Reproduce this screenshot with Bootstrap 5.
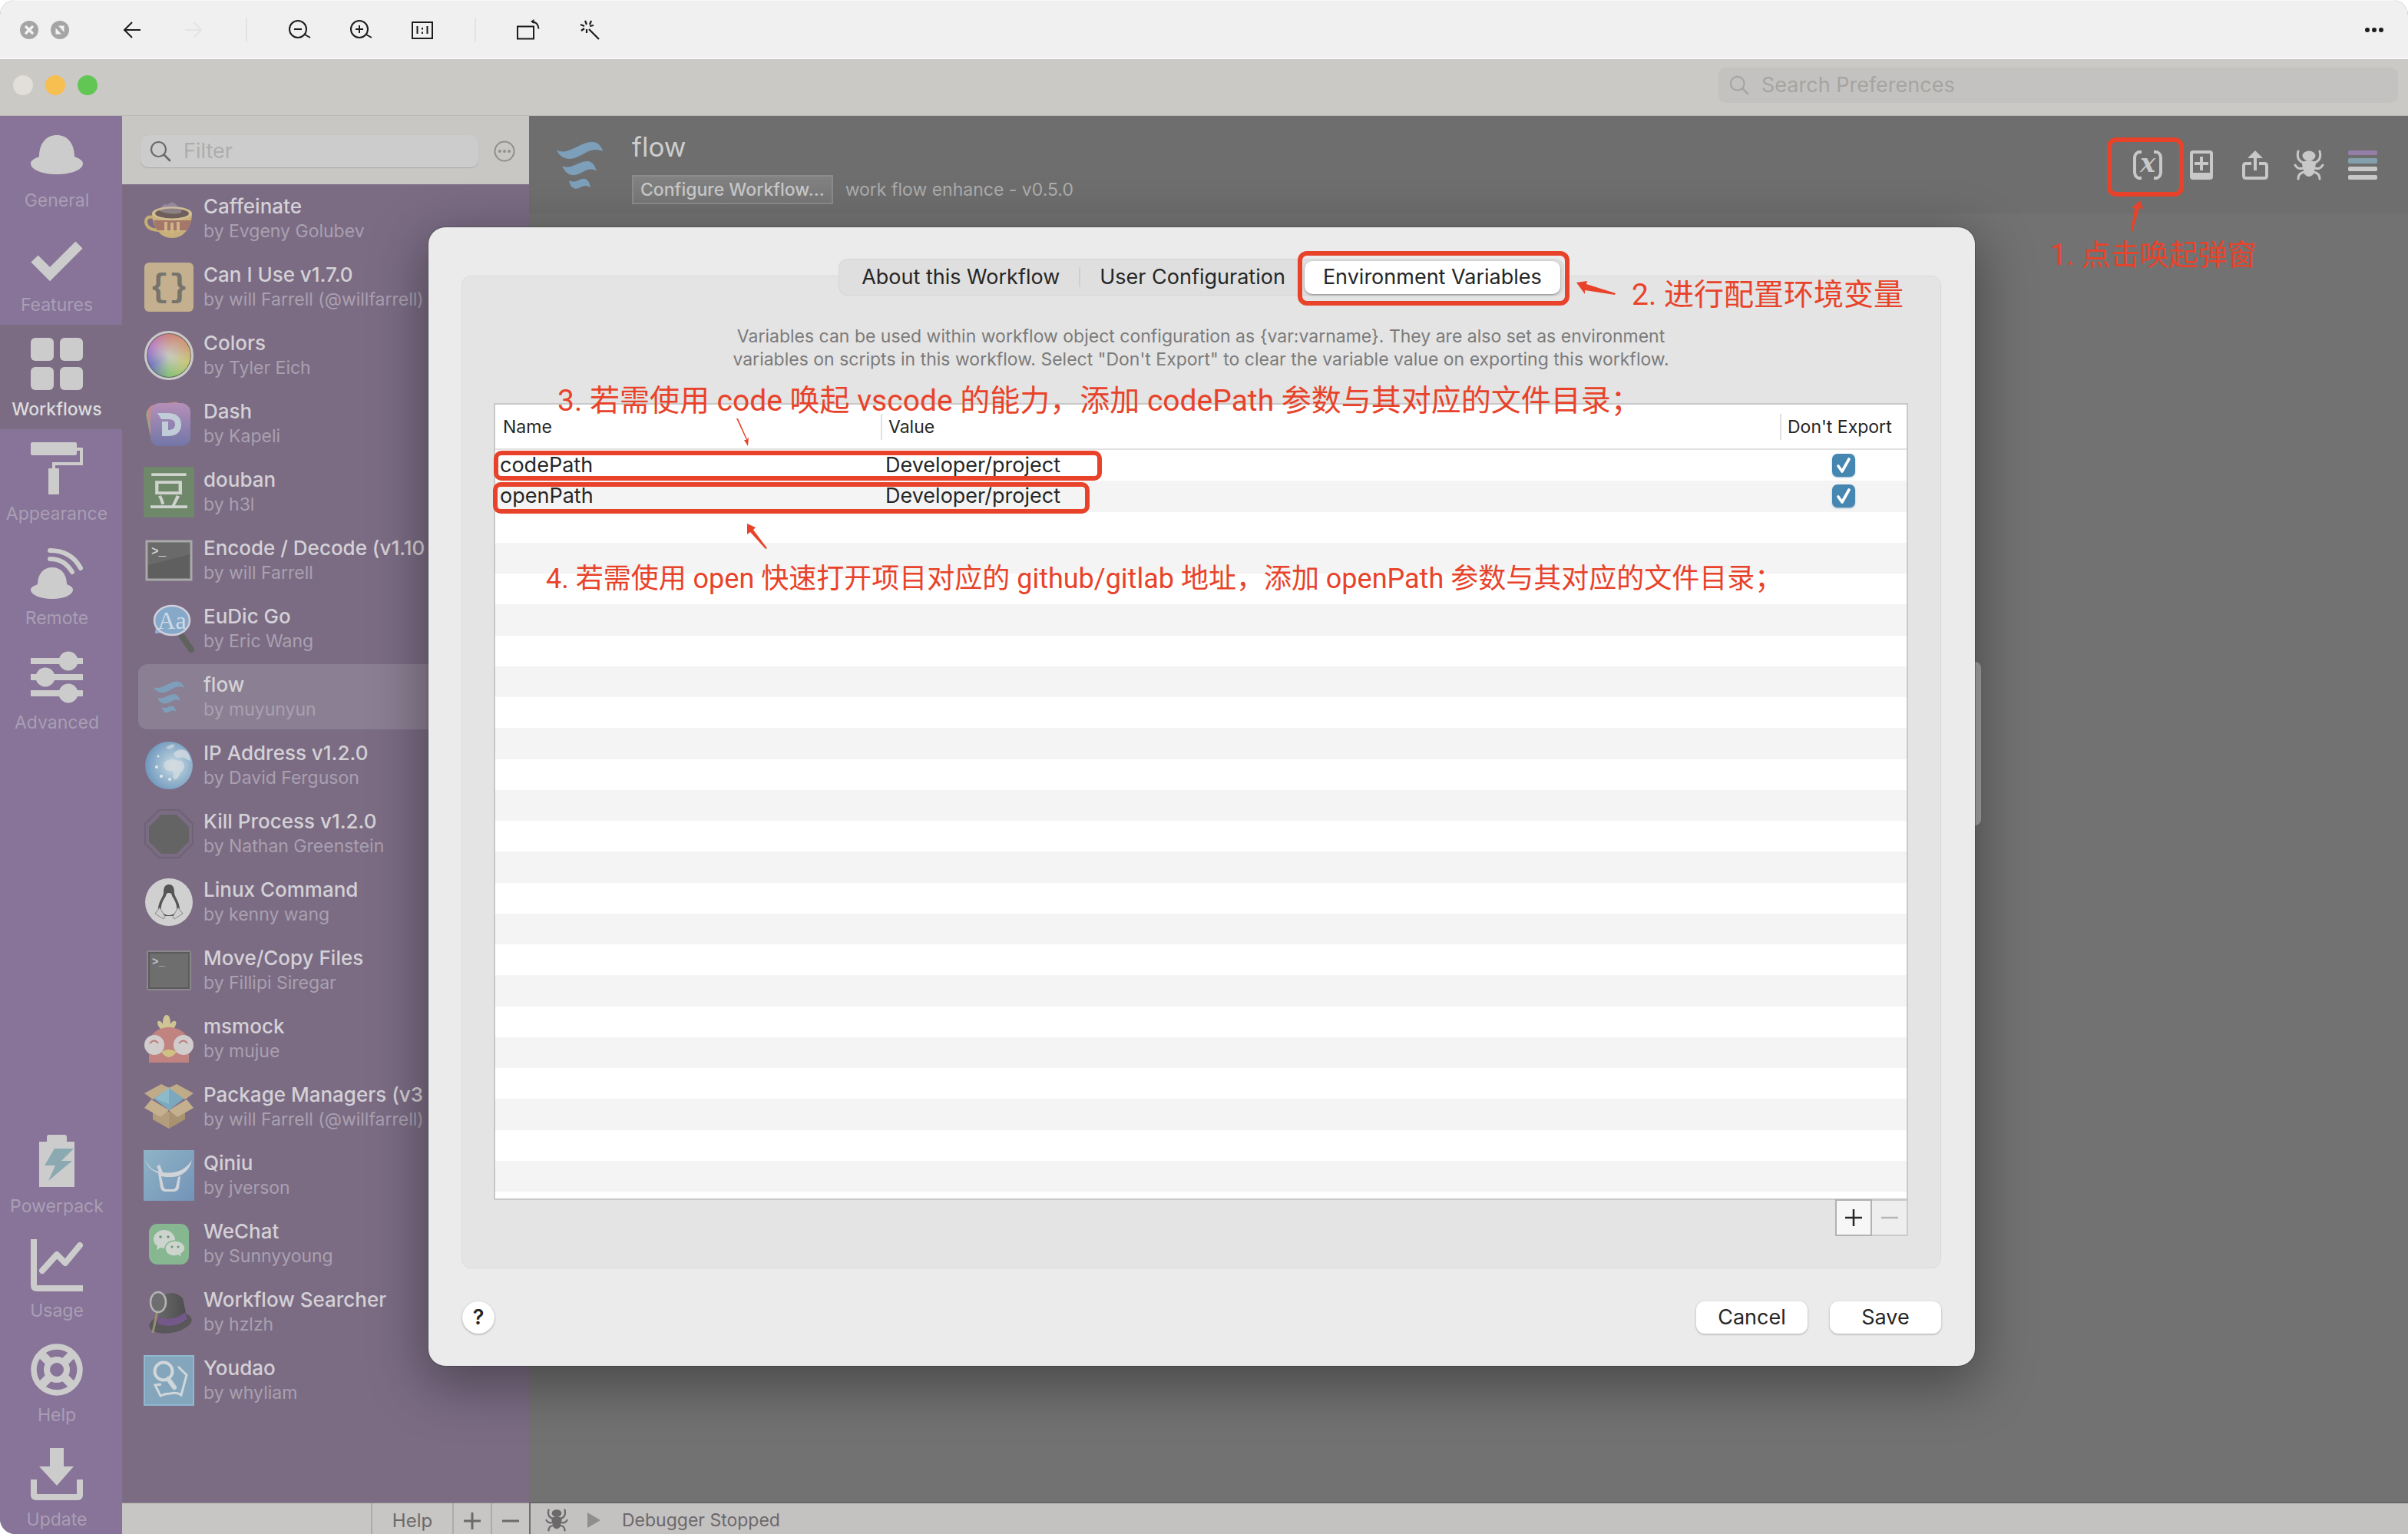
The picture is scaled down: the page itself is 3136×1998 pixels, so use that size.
<!DOCTYPE html>
<html lang="en">
<head>
<meta charset="utf-8">
<meta name="viewport" content="width=device-width, initial-scale=1">
<title>Workflows</title>
<link href="https://cdn.jsdelivr.net/npm/bootstrap@5.3.0/dist/css/bootstrap.min.css" rel="stylesheet">
<style>
  :root { --ink: #262626; --pale: #cccccc; --pin: #e8432a; }
  body { font-family: Inter, "Noto Sans CJK SC", sans-serif; font-size: 27px; line-height: 32px; color: var(--ink); background: #fff; }
  button { border: 0; padding: 0; background: none; color: inherit; }
  svg { display: block; flex: none; }
  .shell { height: 100vh; overflow: hidden; border-radius: 20px 20px 0 20px; background: #6f6f6f; }

  /* viewer toolbar */
  .viewer { height: 77px; padding: 0 4px 0 18px; background: #f0f0f0; border-top: 1px solid #f8f8f8; border-bottom: 1px solid #fff; color: #1c1c1c; }
  .viewer .dot-slot { width: 40px; }
  .viewer .tool-slot { width: 80px; height: 75px; }
  .viewer .tool-nav { margin-left: 34px; }
  .viewer .rule-line { width: 2px; height: 32px; margin: 0 28px; background: #e2e2e2; }

  /* window title bar */
  .titlebar { height: 74px; padding: 0 13px 5px 17px; background: #cac9c5; border-bottom: 1px solid #b9b8b5; }
  .light { width: 26px; height: 26px; border-radius: 50%; }
  .find-prefs { width: 885px; height: 46px; padding: 0 14px; border-radius: 10px; background: #c4c2c0; }
  .find-prefs input, .find-list input { flex: 1; min-width: 0; border: 0; padding: 0; background: none; outline: 0; color: #555; }
  .find-prefs input::placeholder { color: #a6a4a2; opacity: 1; }
  .find-list input::placeholder { color: #adadad; opacity: 1; }

  /* purple rail */
  .rail { width: 159px; background: #877498; color: var(--pale); }
  .rail a { color: #aa9eb5; font-size: 23px; line-height: 30px; padding: 17px 11px 10px 0; display: flex; flex-direction: column; align-items: center; gap: 10px; text-decoration: none; height: 136px; }
  .rail a svg { color: var(--pale); }
  .rail a.current { background: #7b6c84; color: #dcdcdc; font-weight: 500; }
  .rail .rail-end a:last-child { height: 129px; }

  /* workflow list */
  .flows { width: 530px; background: #7b6c84; }
  .flows-top { height: 89px; padding: 3px 18px 0 24px; background: #c8c7c4; }
  .find-list { width: 440px; height: 42px; padding: 0 12px; border-radius: 10px; background: #cccccc; box-shadow: 0 1px 1px #a9a9a9, 0 0 1px #bbb; }
  .flow-list { padding: 2px 21px 0; }
  .flow-item { height: 85px; margin-bottom: 4px; padding-left: 8px; border-radius: 12px; gap: 13px; white-space: nowrap; color: #d4d1d6; text-decoration: none; }
  .flow-item.current { background: #8b7f93; }
  .flow-item strong { font-weight: 500; font-size: 26px; line-height: 33px; display: block; }
  .flow-item small { font-size: 23px; line-height: 33px; display: block; color: #aaa0b0; }
  .flow-icon { width: 64px; height: 64px; overflow: visible; }
  .foot { height: 41px; border-top: 1px solid #8c8a8c; font-size: 24px; color: #6b6a6a; background: #c7c6c4; }
  .foot button { border-left: 2px solid #adacaa; height: 40px; padding-top: 5px; }
  .foot .foot-help { width: 106px; }
  .foot .foot-step { width: 50px; }

  /* canvas */
  .stage-top { height: 127px; padding: 20px 39px 0 36px; background: #6e6e6e; }
  .stage-body { background: #727272; }
  .stage-logo { margin-top: 13px; }
  .stage-text { padding-left: 38px; }
  .stage-title { font-size: 35px; line-height: 40px; font-weight: 400; color: #cdcdcd; margin: 0 0 17px; }
  .btn-config { height: 38px; padding: 0 9px; border: 2px solid #8b8b8b; background: linear-gradient(#828282, #777); color: #c8c8c8; font-size: 23px; line-height: 32px; font-weight: 500; }
  .stage-note { font-size: 23px; color: #acacac; }
  .stage-tools { gap: 30px; color: #c8c8c8; padding-top: 24px; }
  .stage-tools button { width: 40px; height: 40px; }
  .debug { height: 41px; background: #c4c1c1; border-top: 1px solid #59595b; border-left: 2px solid #6d6d6d; padding: 4px 0 0 19px; font-size: 23px; color: #6b696a; }

  /* sheet */
  .sheet { position: absolute; top: 296px; left: 558px; right: 564px; padding: 42px 44px 42px 43px; border-radius: 22px; background: #ebebeb; box-shadow: 0 0 0 1px rgba(60,60,60,.45), 0 20px 70px 6px rgba(0,0,0,.36); }
  .grip { position: absolute; top: 862px; right: 556px; width: 40px; height: 213px; border-radius: 8px; background: #a9a9a9; }
  .seg { height: 46px; padding: 1px 4px; border-radius: 11px; background: #dfdfdf; box-shadow: 0 0 0 1px #d6d6d6; margin-bottom: -25px; position: relative; }
  .seg button { height: 43px; padding: 0 25px; border-radius: 10px; white-space: nowrap; }
  .seg button.on { padding: 0 24px; background: #fff; box-shadow: 0 1px 3px rgba(0,0,0,.4); }
  .seg .seg-line { width: 2px; height: 26px; background: #cfcfcf; }
  .pane { padding: 63px 42px 41px 41px; border: 1px solid #dadada; border-radius: 12px; background: #e4e4e4; }
  .pane p { font-size: 23px; line-height: 30px; color: #7b7b7b; margin-bottom: 42px; }
  .vars-box { height: 1038px; border: 2px solid #c8c8c8; background: #fff; overflow: hidden; }
  .vars { width: 100%; height: 1025px; table-layout: fixed; border-collapse: separate; border-spacing: 0; }
  .vars th { height: 59px; padding: 0 10px; font-size: 23px; font-weight: 400; border-bottom: 2px solid #e2e2e2; position: relative; }
  .vars th + th::before { content: ""; position: absolute; left: 0; top: 12px; width: 2px; height: 34px; background: #e0e0e0; }
  .vars td { height: 40px; padding: 0 6px; line-height: 32px; }
  .vars tbody tr:nth-child(even) { background: #f4f4f4; }
  .vars .col-name { width: 502px; }
  .vars .col-skip { width: 165px; }
  .tick { appearance: none; display: block; width: 30px; height: 30px; margin: 0 auto; border-radius: 7px; box-shadow: 0 1px 2px rgba(60,120,170,.5);
    background: #4687b2 url("data:image/svg+xml,%3Csvg xmlns='http://www.w3.org/2000/svg' viewBox='0 0 30 30'%3E%3Cpath d='M8 16l5 7L22 7' fill='none' stroke='white' stroke-width='3.600' stroke-linecap='round' stroke-linejoin='round'/%3E%3C/svg%3E") center/100%; }
  .step { width: 48px; height: 48px; border: 2px solid #b2b2b2; background: #f7f7f7; margin-top: -1px; }
  .step + .step { border-color: #cacaca; border-left: 0; background: #eeeeee; color: #b5b5b5; width: 47px; }
  .sheet-foot { padding: 43px 0 0 1px; gap: 29px; }
  .push { width: 145px; height: 42px; border-radius: 11px; background: #fff; box-shadow: 0 1px 3px rgba(0,0,0,.28); }
  .help-dot { width: 42px; height: 42px; border-radius: 50%; background: #fff; box-shadow: 0 1px 3px rgba(0,0,0,.3); font-weight: 600; }

  /* hand-drawn notes */
  .notes { position: absolute; left: 0; top: 0; pointer-events: none; }
  .note { position: absolute; white-space: nowrap; font: 39px/48px Roboto, "Noto Sans CJK SC", sans-serif; color: var(--pin); }
  .note-1 { left: 2670px; top: 308px; font-size: 38px; }
  .note-2 { left: 2125px; top: 360px; }
  .note-3 { left: 726px; top: 498px; }
  .note-4 { left: 711px; top: 730px; font-size: 36px; }
</style>
</head>
<body>
<svg width="0" height="0" class="position-absolute" aria-hidden="true">
  <defs>
    <linearGradient id="gDash" x1="0" y1="0" x2="0" y2="1"><stop offset="0" stop-color="#b58fb8"/><stop offset="1" stop-color="#7277a8"/></linearGradient>
    <linearGradient id="gQiniu" x1="0" y1="0" x2="1" y2="1"><stop offset="0" stop-color="#8fb4c6"/><stop offset="1" stop-color="#7393b8"/></linearGradient>
    <radialGradient id="gGlobe" cx=".6" cy=".5" r=".6"><stop offset="0" stop-color="#d5dfe4"/><stop offset=".35" stop-color="#a9c4d6"/><stop offset="1" stop-color="#6f97bd"/></radialGradient>
    <linearGradient id="gHat" x1="0" y1="0" x2="1" y2="0"><stop offset="0" stop-color="#6a6a6a"/><stop offset="1" stop-color="#4d4d4f"/></linearGradient>
    <symbol id="wave" viewBox="0 0 60 63"><path d="M0 12C6 14 12 14 18 11C28 7 38 0 48 1C54 2 58 6 60 13C56 11 50 10 44 12C34 16 26 23 16 23C8 22 3 18 0 12ZM7 32C11 34 16 34 21 32C28 29 34 26 41 26C47 27 50 32 52 39C48 36 43 36 38 38C32 41 26 45 20 44C13 43 10 38 7 32ZM16 51C20 53 24 53 28 51C34 48 38 48 41 52C43 54 43 57 44 60C40 58 37 57 33 59C29 61 26 63 22 61C18 59 17 55 16 51Z" fill="#7d9fba"/></symbol>
    <symbol id="bug" viewBox="0 0 40 40"><g fill="currentColor"><ellipse cx="20" cy="8" rx="8.500" ry="6.500"/><path d="M11 17c3-4 15-4 18 0c0 5-2 7-2 11s-4 7-7 7s-7-3-7-7s-2-6-2-11z"/></g><g fill="none" stroke="currentColor" stroke-width="3" stroke-linecap="round"><path d="M6 2c-2 8 0 13 7 15M34 2c2 8 0 13-7 15M2 20c3 5 6 5 11 4M38 20c-3 5-6 5-11 4M6 38c0-5 2-8 8-9M34 38c0-5-2-8-8-9"/></g></symbol>
    <symbol id="lens" viewBox="0 0 28 28"><g fill="none" stroke="currentColor" stroke-linecap="round"><circle cx="11.500" cy="11.500" r="9.500" stroke-width="2.200"/><path d="M18.500 18.500L26 26" stroke-width="2.800"/></g></symbol>
  </defs>
</svg>

<div class="shell d-flex flex-column">
  <header class="viewer d-flex align-items-center">
    <button class="dot-slot d-flex justify-content-center" aria-label="Close"><svg width="24" height="24"><circle cx="12" cy="12" r="12" fill="#a5a5a5"/><path d="M8 8l8 8M16 8l-8 8" stroke="#f2f2f2" stroke-width="3.500" stroke-linecap="round"/></svg></button>
    <button class="dot-slot d-flex justify-content-center" aria-label="Full screen"><svg width="24" height="24"><circle cx="12" cy="12" r="12" fill="#a5a5a5"/><path d="M10 6.500h7.500V15zM6.500 9.500V17.500H14z" fill="#f2f2f2"/></svg></button>
    <div class="tool-nav d-flex">
      <button class="tool-slot d-flex align-items-center justify-content-center" aria-label="Back"><svg width="24" height="24" fill="none" stroke="currentColor" stroke-width="2"><path d="M23 12H2M12 2L2 12l10 10"/></svg></button>
      <button class="tool-slot d-flex align-items-center justify-content-center" aria-label="Forward"><svg width="24" height="24" fill="none" stroke="#e4e4e4" stroke-width="2"><path d="M1 12h21M12 2l10 10l-10 10"/></svg></button>
    </div>
    <div class="rule-line"></div>
    <button class="tool-slot d-flex align-items-center justify-content-center" aria-label="Zoom out"><svg width="30" height="28" fill="none" stroke="currentColor" stroke-width="2"><circle cx="13" cy="13" r="11"/><path d="M8 13h10M21 19.500l8 4.500"/></svg></button>
    <button class="tool-slot d-flex align-items-center justify-content-center" aria-label="Zoom in"><svg width="30" height="28" fill="none" stroke="currentColor" stroke-width="2"><circle cx="13" cy="13" r="11"/><path d="M8 13h10M13 8v10M21 19.500l8 4.500"/></svg></button>
    <button class="tool-slot d-flex align-items-center justify-content-center" aria-label="Actual size"><svg width="28" height="24" fill="none" stroke="currentColor" stroke-width="2"><path d="M1 2h26v21H1zM7.500 7v10M20.500 7v10M14 9v2.500M14 14.500V17"/></svg></button>
    <div class="rule-line"></div>
    <button class="tool-slot d-flex align-items-center justify-content-center" aria-label="Rotate"><svg width="30" height="28" fill="none" stroke="currentColor" stroke-width="2"><path d="M1 9.500h21v16h-21zM20 3.500c6 0 8 4 8.500 9"/><path d="M18 3L22.500 0v6z" fill="currentColor" stroke="none"/></svg></button>
    <button class="tool-slot d-flex align-items-center justify-content-center" aria-label="Enhance"><svg width="26" height="26" fill="none" stroke="currentColor" stroke-width="2.200"><path d="M12 12l13 13M9 6L7 1M13 6l2-5M6 8L1 6M13 8l5-1M6 11l-4 3M9 12v5"/></svg></button>
    <button class="tool-slot d-flex align-items-center justify-content-center ms-auto" aria-label="More"><svg width="26" height="8" fill="currentColor"><circle cx="4" cy="4" r="3"/><circle cx="13" cy="4" r="3"/><circle cx="22" cy="4" r="3"/></svg></button>
  </header>

  <div class="titlebar d-flex align-items-center justify-content-between">
    <div class="d-flex gap-3"><span class="light" style="background:#e2deda"></span><span class="light" style="background:#f6bf4f"></span><span class="light" style="background:#62c655"></span></div>
    <label class="find-prefs d-flex align-items-center gap-3"><svg width="26" height="28" color="#a6a4a2"><use href="#lens"/></svg><input type="search" placeholder="Search Preferences" aria-label="Search Preferences"></label>
  </div>

  <div class="d-flex flex-fill" style="min-height:0">
    <nav class="rail d-flex flex-column justify-content-between flex-shrink-0">
      <div>
        <a href="#"><svg width="68" height="68" fill="currentColor"><path d="M11 36C11 18 21 8 34 8s23 10 23 28c7 3 11 5 11 9c0 8-15 14-34 14S0 53 0 45c0-4 4-6 11-9z"/></svg>General</a>
        <a href="#"><svg width="68" height="68" fill="none" stroke="currentColor" stroke-width="13"><path d="M5 33l20 20L63 15"/></svg>Features</a>
        <a href="#" class="current"><svg width="68" height="68" fill="currentColor"><rect width="30" height="30" rx="6"/><rect x="38" width="30" height="30" rx="6"/><rect y="38" width="30" height="30" rx="6"/><rect x="38" y="38" width="30" height="30" rx="6"/></svg>Workflows</a>
        <a href="#"><svg width="68" height="68"><rect width="60" height="17" rx="2" fill="currentColor"/><path d="M59 9h7v19H30v8" fill="none" stroke="currentColor" stroke-width="4"/><rect x="23" y="34" width="14" height="34" rx="1" fill="currentColor"/></svg>Appearance</a>
        <a href="#"><svg width="68" height="68"><path d="M9 49C9 35 17 27 28 27s19 8 19 22c5 2 8 4 8 7c0 7-12 12-27 12S0 63 0 56c0-3 4-5 9-7z" fill="currentColor"/><g fill="none" stroke="currentColor" stroke-width="6" stroke-linecap="round"><path d="M25 16c14 0 22 6 29 17M25 5c19 0 32 8 40 23"/></g></svg>Remote</a>
        <a href="#"><svg width="68" height="68" fill="currentColor"><path d="M0 9h68v8H0zM0 30h68v8H0zM0 51h68v8H0z"/><circle cx="49" cy="13" r="12.500"/><circle cx="19" cy="34" r="12.500"/><circle cx="49" cy="55" r="12.500"/></svg>Advanced</a>
      </div>
      <div class="rail-end">
        <a href="#"><svg width="68" height="68"><path d="M24 0h20q3 0 3 3v6h10v59H11V9h10V3q0-3 3-3z" fill="currentColor"/><path d="M33 18h25L42 34h14L25 60l9-20H20z" fill="#8ba9b0" transform="translate(-2)"/></svg>Powerpack</a>
        <a href="#"><svg width="68" height="68" fill="none" stroke="currentColor" stroke-width="8"><path d="M4 0v60q0 4 4 4h60"/><path d="M15 41l19-21l11 11L64 8" stroke-linecap="round" stroke-linejoin="round"/></svg>Usage</a>
        <a href="#"><svg width="68" height="68" fill="none" stroke="currentColor"><circle cx="34" cy="34" r="30" stroke-width="7.500"/><circle cx="34" cy="34" r="13" stroke-width="8"/><path d="M13 13l12 12M55 13L43 25M13 55l12-12M55 55L43 43" stroke-width="11"/></svg>Help</a>
        <a href="#"><svg width="68" height="68"><path d="M25 0h18v24h13L34 49L11 24h14z" fill="currentColor"/><path d="M4 41v20q0 3 3 3h54q3 0 3-3V41" fill="none" stroke="currentColor" stroke-width="8"/></svg>Update</a>
      </div>
    </nav>

    <section class="flows d-flex flex-column flex-shrink-0">
      <div class="flows-top d-flex align-items-center justify-content-between">
        <label class="find-list d-flex align-items-center gap-3"><svg width="28" height="28" color="#6a6a6a"><use href="#lens"/></svg><input type="search" placeholder="Filter" aria-label="Filter"></label>
        <button aria-label="Options"><svg width="28" height="28"><circle cx="14" cy="14" r="12.500" fill="none" stroke="#8f8f8f" stroke-width="2"/><g fill="#8f8f8f"><circle cx="8" cy="14" r="2"/><circle cx="14" cy="14" r="2"/><circle cx="20" cy="14" r="2"/></g></svg></button>
      </div>
      <div class="flow-list flex-fill overflow-hidden">
        <a href="#" class="flow-item d-flex align-items-center"><svg class="flow-icon" viewBox="0 0 64 64"><path d="M12 30q-10-2-10 6q1 10 16 11" fill="none" stroke="#c4ad72" stroke-width="4"/><path d="M10 25c0 14 8 32 26 32s26-18 26-32z" fill="#c9b07a"/><path d="M12 34c1 5 2 9 5 13h38c3-4 5-8 6-13z" fill="#a5766a"/><path d="M26 36h4v13h-4zM34 37h4v14h-4zM42 36h4v13h-4z" fill="#cdb585"/><ellipse cx="36" cy="25" rx="26" ry="9" fill="#d2bf92"/><ellipse cx="36" cy="25" rx="22" ry="6.500" fill="#6f5f5c"/><path d="M20 22q4-12 10-8q6-8 14 2q6 2 4 8q-12 4-28-2z" fill="#bdb5bd" opacity=".4"/></svg><span><strong>Caffeinate</strong><small>by Evgeny Golubev</small></span></a>
        <a href="#" class="flow-item d-flex align-items-center"><svg class="flow-icon" viewBox="0 0 64 64"><rect width="64" height="64" rx="6" fill="#c4b08e"/><text x="32" y="44" font-family="Liberation Mono" font-weight="700" font-size="42" text-anchor="middle" fill="#77736d">{}</text></svg><span><strong>Can I Use v1.7.0</strong><small>by will Farrell (@willfarrell)</small></span></a>
        <a href="#" class="flow-item d-flex align-items-center"><svg class="flow-icon" viewBox="0 0 64 64"><foreignObject width="64" height="64"><div style="width:64px;height:64px;border-radius:50%;border:3px solid #c9c9c9;box-shadow:inset 0 0 0 1px #666;background:radial-gradient(circle,#c8c8c0 0,rgba(200,200,192,0) 70%),conic-gradient(#cf7f78,#cf9a70 60deg,#c9c870 110deg,#80c070 180deg,#6870c0 240deg,#b878c8 300deg,#cf7f78)"></div></foreignObject></svg><span><strong>Colors</strong><small>by Tyler Eich</small></span></a>
        <a href="#" class="flow-item d-flex align-items-center"><svg class="flow-icon" viewBox="0 0 64 64"><rect x="5" y="7" width="44" height="48" rx="10" fill="#8fab83" transform="rotate(-12 28 32)"/><rect x="6" y="5" width="46" height="50" rx="10" fill="#c68b87" transform="rotate(-7 30 30)"/><rect x="8" y="5" width="52" height="56" rx="12" fill="url(#gDash)"/><path d="M17 18h14c10 0 17 5 17 15s-7 15-17 15h-8V29h8v11c5 0 9-2 9-7s-3-7-9-7h-9z" fill="#c0ccd8"/></svg><span><strong>Dash</strong><small>by Kapeli</small></span></a>
        <a href="#" class="flow-item d-flex align-items-center"><svg class="flow-icon" viewBox="0 0 64 64"><rect y="-1" width="66" height="66" x="-1" rx="2" fill="#6f8869"/><text x="32" y="51" font-family="Noto Sans CJK SC" font-size="54" text-anchor="middle" fill="#cfd3ce">豆</text></svg><span><strong>douban</strong><small>by h3l</small></span></a>
        <a href="#" class="flow-item d-flex align-items-center"><svg class="flow-icon" viewBox="0 0 64 64"><rect x="3" y="7" width="58" height="50" fill="#5f5f5f" stroke="#a9a9a9" stroke-width="3"/><path d="M5 38L59 24V9H5z" fill="#6a6a6a"/><text x="9" y="25" font-family="Liberation Mono" font-weight="700" font-size="16" fill="#d0d0d0">&gt;_</text></svg><span><strong>Encode / Decode (v1.10</strong><small>by will Farrell</small></span></a>
        <a href="#" class="flow-item d-flex align-items-center"><svg class="flow-icon" viewBox="0 0 64 64"><path d="M49 42l12 17" stroke="#5f625f" stroke-width="8" stroke-linecap="round"/><path d="M14 38l1-10l12 9z" fill="#8fb0cc"/><ellipse cx="36" cy="21" rx="23" ry="19" fill="#86a9c9" stroke="#cfcfdc" stroke-width="2.500"/><text x="36" y="32" font-family="Liberation Serif" font-size="32" text-anchor="middle" fill="#cfdbe6">Aa</text></svg><span><strong>EuDic Go</strong><small>by Eric Wang</small></span></a>
        <a href="#" class="flow-item current d-flex align-items-center"><svg class="flow-icon" viewBox="0 0 64 64"><use href="#wave" x="12" y="11" width="40" height="42"/></svg><span><strong>flow</strong><small>by muyunyun</small></span></a>
        <a href="#" class="flow-item d-flex align-items-center"><svg class="flow-icon" viewBox="0 0 64 64"><circle cx="32" cy="32" r="31" fill="url(#gGlobe)"/><path d="M26 28c6-6 14-4 18-2c4-2 8 2 8 8c-2 6-6 8-8 14c-4 4-8 2-6-4c0-4-2-6-6-5c-6-1-8-7-6-11zM38 16c6-6 12-6 18-2c2 4 4 8 4 12c-6-2-8-6-14-4c-4 0-8-2-8-6z" fill="#d2dbe0" opacity=".8"/><path d="M28 9q6-6 12-4q-2 5-8 6z" fill="#c6d3da" opacity=".8"/><g fill="#dfe8ec"><circle cx="16" cy="34" r="2"/><circle cx="22" cy="46" r="2"/><circle cx="33" cy="50" r="2"/><circle cx="18" cy="20" r="1.500"/></g></svg><span><strong>IP Address v1.2.0</strong><small>by David Ferguson</small></span></a>
        <a href="#" class="flow-item d-flex align-items-center"><svg class="flow-icon" viewBox="0 0 64 64"><path d="M19 1h26l18 18v26L45 63H19L1 45V19z" fill="none" stroke="#6d6374" stroke-width="2"/><path d="M22 7h20l16 16v19L42 58H22L6 42V23z" fill="#646464"/></svg><span><strong>Kill Process v1.2.0</strong><small>by Nathan Greenstein</small></span></a>
        <a href="#" class="flow-item d-flex align-items-center"><svg class="flow-icon" viewBox="0 0 64 64"><circle cx="32" cy="32" r="31" fill="#d0d0d0"/><path d="M32 9c-6 0-7 5-7 11c0 5-8 12-7 24l8 6h12l8-6c1-12-7-19-7-24c0-6-1-11-7-11z" fill="#555"/><path d="M32 20c-3 0-4 2-4 4c-4 6-7 12-6 19c2 4 6 6 10 6s8-2 10-6c1-7-2-13-6-19c0-2-1-4-4-4z" fill="#d4d4d4"/><path d="M14 47l6-8l7 12l-2 3zM50 47l-6-8l-7 12l2 3z" fill="#cfcfcf" stroke="#888" stroke-width="1"/></svg><span><strong>Linux Command</strong><small>by kenny wang</small></span></a>
        <a href="#" class="flow-item d-flex align-items-center"><svg class="flow-icon" viewBox="0 0 64 64"><rect x="4" y="7" width="56" height="50" rx="2" fill="#6e6e6e" stroke="#8c888e" stroke-width="2"/><rect x="6" y="9" width="52" height="46" fill="none" stroke="#5b5b5b" stroke-width="2"/><text x="10" y="25" font-family="Liberation Mono" font-weight="700" font-size="14" fill="#c4c4c4">&gt;_</text></svg><span><strong>Move/Copy Files</strong><small>by Fillipi Siregar</small></span></a>
        <a href="#" class="flow-item d-flex align-items-center"><svg class="flow-icon" viewBox="0 0 64 64"><path d="M21 19c-4-4-5-9-3-10c3-1 5 2 6 4c0-6 1-12 5-12s5 6 5 12c1-2 3-5 6-4s1 6-2 10z" fill="#cfc493"/><path d="M6 63V40C6 26 18 17 32 17s26 9 26 23v23z" fill="#c08380"/><circle cx="13" cy="40" r="13" fill="#d2cdcd"/><circle cx="51" cy="40" r="13" fill="#d2cdcd"/><path d="M7 38q6-7 11 0M45 38q6-7 11 0" fill="none" stroke="#bb7f7f" stroke-width="2"/><path d="M22 49q10-6 20 0q-10 14-20 0z" fill="#cfc184"/></svg><span><strong>msmock</strong><small>by mujue</small></span></a>
        <a href="#" class="flow-item d-flex align-items-center"><svg class="flow-icon" viewBox="0 0 64 64"><path d="M11 30l21 8v22L11 48z" fill="#b39d7c"/><path d="M53 30L32 38v22l21-12z" fill="#a8926f"/><path d="M11 20L32 6l21 14L32 36z" fill="#7ba8bd"/><path d="M32 6v22L14 21z" fill="#8db9cb"/><path d="M22 2L32 7L11 22L0 14zM42 2L32 7l21 15l11-8z" fill="#c0ab88"/><path d="M9 22L32 36L21 45L0 33zM55 22L32 36l11 9l21-12z" fill="#c4b08e"/></svg><span><strong>Package Managers (v3</strong><small>by will Farrell (@willfarrell)</small></span></a>
        <a href="#" class="flow-item d-flex align-items-center"><svg class="flow-icon" viewBox="0 0 64 64"><rect x="-1" y="-1" width="66" height="66" fill="url(#gQiniu)"/><path d="M1 12c6 10 9 13 18 15l-3-7l4-2l4 10c14 2 28-1 38-16c-3 14-14 22-27 22c-5 0-9 0-13-1l3 14c1 2 2 3 4 3h8c2 0 3-1 4-3l3-13l3-1l-2 15c-1 4-4 5-8 5H28c-4 0-6-2-7-5l-3-19C8 25 4 20 1 12z" fill="#d0d4d8"/></svg><span><strong>Qiniu</strong><small>by jverson</small></span></a>
        <a href="#" class="flow-item d-flex align-items-center"><svg class="flow-icon" viewBox="0 0 64 64"><rect x="6" y="6" width="52" height="53" rx="11" fill="#86b791"/><g fill="#cdd4ce"><path d="M26 14c-8 0-14 6-14 12c0 4 2 7 5 9l-1 5l5-3c14 4 20-4 19-11c-1-7-7-12-14-12z"/><path d="M40 28c-8 0-13 5-13 10c0 6 5 10 13 10l4-1l4 3v-5c3-2 5-4 5-7c0-5-5-10-13-10z" stroke="#86b791" stroke-width="1.500"/></g><g fill="#6d9477"><circle cx="21" cy="23" r="1.800"/><circle cx="31" cy="23" r="1.800"/><circle cx="36" cy="36" r="1.500"/><circle cx="44" cy="36" r="1.500"/></g></svg><span><strong>WeChat</strong><small>by Sunnyyoung</small></span></a>
        <a href="#" class="flow-item d-flex align-items-center"><svg class="flow-icon" viewBox="0 0 64 64"><ellipse cx="34" cy="46" rx="28" ry="13" fill="#595759" transform="rotate(-10 34 46)"/><path d="M14 42L20 14q16-14 30 0l6 28q-20 14-42 0z" fill="url(#gHat)"/><path d="M17 38q20 8 36-6l3 9q-18 14-39 6z" fill="#74588a"/><path d="M17 30L11 59" stroke="#9a8d76" stroke-width="3"/><ellipse cx="18" cy="19" rx="10" ry="13" fill="#6e6e70" stroke="#b4b4b4" stroke-width="2.500"/></svg><span><strong>Workflow Searcher</strong><small>by hzlzh</small></span></a>
        <a href="#" class="flow-item d-flex align-items-center"><svg class="flow-icon" viewBox="0 0 64 64"><rect width="64" height="64" fill="#83a6bc" stroke="#8fb7cf" stroke-width="2"/><g fill="none" stroke="#d0d6da" stroke-width="4"><circle cx="25" cy="20" r="11.500"/><path d="M31 30l8 11" stroke-width="6" stroke-linecap="round"/><path d="M44 14l11 11l-7 26q-6-4-14-2q-7 0-13 3l-7-14l8-1" stroke-width="3"/></g></svg><span><strong>Youdao</strong><small>by whyliam</small></span></a>
      </div>
      <div class="foot d-flex justify-content-end">
        <button class="foot-help">Help</button>
        <button class="foot-step d-flex align-items-center justify-content-center" aria-label="Add"><svg width="24" height="24" stroke="#6b6a6a" stroke-width="3"><path d="M1 12h22M12 1v22"/></svg></button>
        <button class="foot-step d-flex align-items-center justify-content-center" aria-label="Remove"><svg width="24" height="24" stroke="#6b6a6a" stroke-width="3"><path d="M1 12h22"/></svg></button>
      </div>
    </section>

    <main class="flex-fill d-flex flex-column">
      <div class="stage-top d-flex align-items-start">
        <svg width="60" height="63" class="stage-logo"><use href="#wave"/></svg>
        <div class="stage-text flex-fill">
          <h1 class="stage-title">flow</h1>
          <div class="d-flex align-items-center gap-3"><button class="btn-config">Configure Workflow...</button><span class="stage-note">work flow enhance - v0.5.0</span></div>
        </div>
        <div class="stage-tools d-flex">
          <button aria-label="Variables"><svg width="40" height="40"><path d="M12 3H8q-5 2-5 8v18q0 6 5 8h4M28 3h4q5 2 5 8v18q0 6-5 8h-4" fill="none" stroke="currentColor" stroke-width="4"/><text x="20" y="29" text-anchor="middle" font-family="DejaVu Serif" font-style="italic" font-weight="700" font-size="33" fill="currentColor">x</text></svg></button>
          <button aria-label="Add page"><svg width="40" height="40"><path fill-rule="evenodd" d="M9 1h22q4 0 4 4v30q0 4-4 4H9q-4 0-4-4V5q0-4 4-4zM9 5v25h22V5z" fill="currentColor"/><path d="M11 18h18M20 9v18" stroke="currentColor" stroke-width="4"/></svg></button>
          <button aria-label="Share"><svg width="40" height="40"><path d="M20 1l10 10h-8v16h-4V11h-8z" fill="currentColor"/><path d="M15 18H8q-3 0-3 3v13q0 3 3 3h24q3 0 3-3V21q0-3-3-3h-7" fill="none" stroke="currentColor" stroke-width="4"/></svg></button>
          <button aria-label="Debug"><svg width="40" height="40"><use href="#bug"/></svg></button>
          <button aria-label="Palette"><svg width="40" height="40"><rect x="1" y="1" width="38" height="6" rx="2" fill="#957fa8"/><rect x="1" y="11" width="38" height="7" rx="2" fill="#83a0ac"/><rect x="1" y="22" width="38" height="6" rx="2" fill="currentColor"/><rect x="1" y="33" width="38" height="6" rx="2" fill="currentColor"/></svg></button>
        </div>
      </div>
      <div class="stage-body flex-fill"></div>
      <div class="debug d-flex align-items-center"><svg width="30" height="32"><use href="#bug"/></svg><svg width="18" height="22" class="ms-4"><path d="M1 1l17 10L1 21z" fill="#8f8d8e"/></svg><span class="ms-4 ps-1">Debugger Stopped</span></div>
    </main>
  </div>
</div>

<div class="grip"></div>
<div class="sheet d-flex flex-column" role="dialog" aria-label="Environment Variables">
  <div class="seg d-flex align-items-center align-self-center">
    <button>About this Workflow</button><span class="seg-line"></span><button>User Configuration</button><button class="on">Environment Variables</button>
  </div>
  <div class="pane">
    <p class="text-center">Variables can be used within workflow object configuration as {var:varname}. They are also set as environment<br>variables on scripts in this workflow. Select "Don't Export" to clear the variable value on exporting this workflow.</p>
    <div class="vars-box">
      <table class="vars">
        <thead><tr><th class="col-name">Name</th><th>Value</th><th class="col-skip">Don't Export</th></tr></thead>
        <tbody>
          <tr><td>codePath</td><td>Developer/project</td><td><input class="tick" type="checkbox" checked aria-label="Don't export codePath"></td></tr>
          <tr><td>openPath</td><td>Developer/project</td><td><input class="tick" type="checkbox" checked aria-label="Don't export openPath"></td></tr>
          <tr><td colspan="3"></td></tr><tr><td colspan="3"></td></tr><tr><td colspan="3"></td></tr><tr><td colspan="3"></td></tr>
          <tr><td colspan="3"></td></tr><tr><td colspan="3"></td></tr><tr><td colspan="3"></td></tr><tr><td colspan="3"></td></tr>
          <tr><td colspan="3"></td></tr><tr><td colspan="3"></td></tr><tr><td colspan="3"></td></tr><tr><td colspan="3"></td></tr>
          <tr><td colspan="3"></td></tr><tr><td colspan="3"></td></tr><tr><td colspan="3"></td></tr><tr><td colspan="3"></td></tr>
          <tr><td colspan="3"></td></tr><tr><td colspan="3"></td></tr><tr><td colspan="3"></td></tr><tr><td colspan="3"></td></tr>
          <tr><td colspan="3"></td></tr><tr><td colspan="3"></td></tr>
        </tbody>
      </table>
    </div>
    <div class="d-flex justify-content-end">
      <button class="step d-flex align-items-center justify-content-center" aria-label="Add variable"><svg width="24" height="24" stroke="currentColor" stroke-width="2.500"><path d="M1 12h22M12 1v22"/></svg></button>
      <button class="step d-flex align-items-center justify-content-center" aria-label="Remove variable"><svg width="24" height="24" stroke="currentColor" stroke-width="2.500"><path d="M1 12h22"/></svg></button>
    </div>
  </div>
  <div class="sheet-foot d-flex align-items-center">
    <button class="help-dot me-auto" aria-label="Help">?</button>
    <button class="push">Cancel</button>
    <button class="push">Save</button>
  </div>
</div>

<svg class="notes" width="3136" height="1998" fill="none" stroke="#e8432a" stroke-width="6" aria-hidden="true">
  <rect x="2747" y="182" width="94" height="71" rx="9"/>
  <rect x="1693" y="330" width="348" height="65" rx="9"/>
  <rect x="646" y="590" width="786" height="33" rx="7"/>
  <rect x="645" y="631" width="771" height="35" rx="7"/>
  <g fill="#e8432a" stroke="none">
    <path d="M2787 261l4 11l-5-1l-9 31l-2-1l5-30l-4 0z"/>
    <path d="M2053 368l14-2l-1 4l38 12l-1 2l-39-6l0 5z"/>
    <path d="M974 581l-5-8l3 0l-13-28l2 0l12 27l2-2z"/>
    <path d="M973 682l11 5l-3 3l18 24l-2 1l-20-22l-4 3z"/>
  </g>
</svg>
<div class="note note-1">1. 点击唤起弹窗</div>
<div class="note note-2">2. 进行配置环境变量</div>
<div class="note note-3">3. 若需使用 code 唤起 vscode 的能力，添加 codePath 参数与其对应的文件目录；</div>
<div class="note note-4">4. 若需使用 open 快速打开项目对应的 github/gitlab 地址，添加 openPath 参数与其对应的文件目录；</div>
<script src="https://cdn.jsdelivr.net/npm/bootstrap@5.3.0/dist/js/bootstrap.bundle.min.js"></script>
</body>
</html>
